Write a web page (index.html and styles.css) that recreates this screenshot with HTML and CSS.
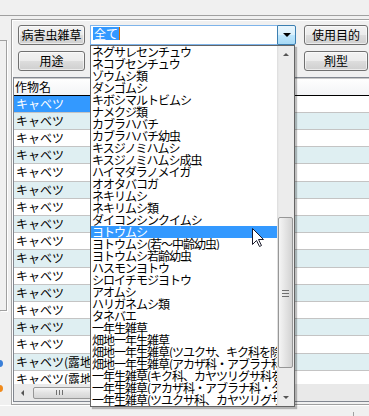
FILE: index.html
```html
<!DOCTYPE html>
<html lang="ja">
<head>
    <meta charset="UTF-8">
    <meta name="viewport" content="width=device-width, initial-scale=1.0">
    <title>作物検索</title>
    <link rel="stylesheet" href="styles.css">
</head>
<body>
    <div class="topbar"></div>

    <div class="main">
        <div class="side">
            <div class="side-box"></div>
            <span class="dot dot-blue"></span>
            <span class="dot dot-orange"></span>
        </div>

        <div class="panel">
            <div class="controls">
                <button class="btn">病害虫雑草</button>
                <div class="combo">
                    <div class="combo-text"><span class="combo-sel">全て</span><span class="caret"></span></div>
                    <div class="combo-btn"><span class="tri-down"></span></div>
                </div>
                <button class="btn btn-right">使用目的</button>
                <button class="btn">用途</button>
                <div></div>
                <button class="btn btn-right">剤型</button>
            </div>

            <div class="grid">
                <div class="grid-head"><div class="cell">作物名</div></div>
                <div class="grid-body">
                    <div class="row selected"><div class="cell">キャベツ</div></div>
                    <div class="row"><div class="cell">キャベツ</div></div>
                    <div class="row"><div class="cell">キャベツ</div></div>
                    <div class="row"><div class="cell">キャベツ</div></div>
                    <div class="row"><div class="cell">キャベツ</div></div>
                    <div class="row"><div class="cell">キャベツ</div></div>
                    <div class="row"><div class="cell">キャベツ</div></div>
                    <div class="row"><div class="cell">キャベツ</div></div>
                    <div class="row"><div class="cell">キャベツ</div></div>
                    <div class="row"><div class="cell">キャベツ</div></div>
                    <div class="row"><div class="cell">キャベツ</div></div>
                    <div class="row"><div class="cell">キャベツ</div></div>
                    <div class="row"><div class="cell">キャベツ</div></div>
                    <div class="row"><div class="cell">キャベツ</div></div>
                    <div class="row"><div class="cell">キャベツ</div></div>
                    <div class="row"><div class="cell">キャベツ(露地栽培)</div></div>
                    <div class="row"><div class="cell">キャベツ(露地栽培)</div></div>
                </div>
                <div class="hscroll">
                    <div class="hscroll-btn"><span class="tri-left"></span></div>
                    <div class="hscroll-thumb"><span class="grip-v"></span></div>
                </div>
            </div>
        </div>
    </div>

    <div class="status"><span class="status-sep"></span></div>

    <div class="droplist">
        <ul class="items">
            <li>ネグサレセンチュウ</li>
            <li>ネコブセンチュウ</li>
            <li>ゾウムシ類</li>
            <li>ダンゴムシ</li>
            <li>キボシマルトビムシ</li>
            <li>ナメクジ類</li>
            <li>カブラハバチ</li>
            <li>カブラハバチ幼虫</li>
            <li>キスジノミハムシ</li>
            <li>キスジノミハムシ成虫</li>
            <li>ハイマダラノメイガ</li>
            <li>オオタバコガ</li>
            <li>ネキリムシ</li>
            <li>ネキリムシ類</li>
            <li>ダイコンシンクイムシ</li>
            <li class="active">ヨトウムシ</li>
            <li>ヨトウムシ(若～中齢幼虫)</li>
            <li>ヨトウムシ若齢幼虫</li>
            <li>ハスモンヨトウ</li>
            <li>シロイチモジヨトウ</li>
            <li>アオムシ</li>
            <li>ハリガネムシ類</li>
            <li>タネバエ</li>
            <li>一年生雑草</li>
            <li>畑地一年生雑草</li>
            <li>畑地一年生雑草(ツユクサ、キク科を除く)</li>
            <li>畑地一年生雑草(アカザ科・アブラナ科)</li>
            <li>一年生雑草(キク科、カヤツリグサ科を除く)</li>
            <li>一年生雑草(アカザ科・アブラナ科・タデ科)</li>
            <li>一年生雑草(ツユクサ科、カヤツリグサ科)</li>
        </ul>
        <div class="vscroll">
            <div class="vscroll-btn"><span class="tri-up"></span></div>
            <div class="vscroll-track"><div class="vscroll-thumb"><span class="grip-h"></span></div></div>
            <div class="vscroll-btn"><span class="tri-down small"></span></div>
        </div>
    </div>

    <svg class="cursor" width="13" height="20" viewBox="0 0 13 20">
        <path d="M0.5 0.5 V16.5 L4.5 12.5 L7.5 18.5 L9.5 17.5 L6.5 11.5 H11.5 Z" fill="#fff" stroke="#1a1a2a" stroke-width="1" stroke-linejoin="round"/>
    </svg>
</body>
</html>
```
FILE: styles.css
```css
body {
    margin: 0;
    width: 369px;
    height: 416px;
    overflow: hidden;
    position: relative;
    background: #f0f0f0;
    font-family: "Noto Sans CJK JP", "Noto Sans", sans-serif;
    font-size: 12px;
    color: #000;
}
*, *:before, *:after {
    box-sizing: border-box;
}
.topbar {
    height: 16px;
    border-bottom: 1px solid #a0a0a0;
}
.main {
    display: flex;
    height: 389px;
}
.side {
    width: 11px;
    display: flex;
    flex-direction: column;
}
.side-box {
    margin-top: 24px;
    width: 7px;
    height: 271px;
    border: 1px solid #a0a0a0;
    border-left: none;
    box-shadow: 1px 1px 0 #fff;
}
.dot {
    display: block;
    width: 7px;
    height: 7px;
    margin-left: -4px;
    border-radius: 50%;
}
.dot-blue {
    margin-top: 49px;
    background: #3a7fd8;
}
.dot-orange {
    margin-top: 18px;
    background: #f08a1c;
}
.panel {
    flex: 1;
    min-width: 0;
    margin-top: 3px;
    border: 1px solid #a0a0a0;
    border-right: none;
    box-shadow: inset 1px 1px 0 #fff;
    display: flex;
    flex-direction: column;
}
.controls {
    display: grid;
    grid-template-columns: 67px 206px 67px;
    grid-auto-rows: 20px;
    column-gap: 5px;
    row-gap: 6px;
    padding: 5px 0 0 6px;
    margin-bottom: 6px;
}
.btn {
    font-family: inherit;
    font-size: 12px;
    padding: 0;
    line-height: 18px;
    color: #000;
    border: 1px solid #707070;
    border-radius: 3px;
    background: linear-gradient(#f2f2f2 0%, #ebebeb 50%, #dddddd 51%, #cfcfcf 100%);
    box-shadow: inset 0 0 0 1px rgba(255, 255, 255, 0.6);
}
.btn-right {
    margin-left: 3px;
}
.combo {
    display: flex;
}
.combo-text {
    flex: 1;
    background: #fff;
    border: 1px solid #7eb4ea;
    border-right: none;
    padding: 1px 0 0 2px;
    display: flex;
    align-items: flex-start;
}
.combo-sel {
    background: #3399ff;
    color: #fff;
    line-height: 13px;
    height: 13px;
    padding: 0 1px;
}
.caret {
    width: 1px;
    height: 13px;
    background: #cc6600;
}
.combo-btn {
    width: 19px;
    border: 1px solid #3c7fb1;
    border-radius: 0 2px 2px 0;
    background: linear-gradient(#eaf6fd 0%, #d9f0fc 50%, #bee6fd 51%, #a7d9f5 100%);
    display: flex;
    align-items: center;
    justify-content: center;
}
.tri-down {
    width: 0;
    height: 0;
    border-left: 4px solid transparent;
    border-right: 4px solid transparent;
    border-top: 4px solid #000;
}
.tri-down.small {
    border-left-width: 3px;
    border-right-width: 3px;
    border-top: 3px solid #555;
}
.tri-up {
    width: 0;
    height: 0;
    border-left: 3px solid transparent;
    border-right: 3px solid transparent;
    border-bottom: 3px solid #555;
}
.tri-left {
    width: 0;
    height: 0;
    border-top: 3px solid transparent;
    border-bottom: 3px solid transparent;
    border-right: 3px solid #555;
}
.grid {
    margin-left: 1px;
    height: 325px;
    border: 1px solid #828790;
    border-right: none;
    background: #fff;
    display: flex;
    flex-direction: column;
    overflow: hidden;
}
.grid-head {
    height: 18px;
    flex: none;
    border-bottom: 1px solid #000;
    box-shadow: inset 0 1px 0 #c9c9c9;
    background: linear-gradient(#ffffff, #f3f4f6);
    display: flex;
}
.grid-head .cell {
    line-height: 18px;
    padding-left: 1px;
}
.grid-body {
    flex: 1;
    overflow: hidden;
}
.row {
    height: 17px;
    border-bottom: 1px solid #c4c4c4;
    display: flex;
}
.row:nth-child(even) {
    background: #dfeff2;
}
.row:nth-child(5n) {
    height: 18px;
}
.cell {
    width: 76px;
    padding-left: 2px;
    line-height: 16px;
    white-space: nowrap;
    overflow: hidden;
}
.row.selected .cell {
    background: #3399ff;
    color: #fff;
}
.hscroll {
    height: 17px;
    flex: none;
    background: #e9e9e9;
    display: flex;
    align-items: center;
}
.hscroll-btn {
    width: 17px;
    height: 17px;
    display: flex;
    align-items: center;
    justify-content: center;
}
.hscroll-thumb {
    margin-left: 2px;
    width: 220px;
    height: 12px;
    border: 1px solid #979797;
    border-radius: 2px;
    background: linear-gradient(#f5f5f5, #e2e2e2 50%, #d6d6d6);
    padding-left: 22px;
    display: flex;
    align-items: center;
}
.grip-v {
    width: 7px;
    height: 5px;
    background: repeating-linear-gradient(90deg, #707070 0 1px, transparent 1px 3px);
}
.status {
    height: 11px;
    border-top: 1px solid #fff;
    display: flex;
    justify-content: flex-end;
}
.status-sep {
    width: 1px;
    height: 5px;
    margin: 6px 15px 0 0;
    background: #a0a0a0;
}
.droplist {
    position: absolute;
    left: 90px;
    top: 45px;
    width: 205px;
    height: 362px;
    border: 1px solid #646464;
    background: #fff;
    box-shadow: 2px 2px 1px rgba(0, 0, 0, 0.25);
    display: flex;
}
.items {
    list-style: none;
    margin: 0;
    padding: 0;
    width: 186px;
    overflow: hidden;
}
.items li {
    height: 12px;
    line-height: 12px;
    padding-left: 1px;
    letter-spacing: -1px;
    white-space: nowrap;
    overflow: hidden;
}
.items li.active {
    background: #3399ff;
    color: #fff;
}
.vscroll {
    width: 17px;
    background: linear-gradient(90deg, #dcdcdc, #ececec 2px, #ececec);
    display: flex;
    flex-direction: column;
}
.vscroll-btn {
    height: 17px;
    flex: none;
    display: flex;
    align-items: center;
    justify-content: center;
}
.vscroll-track {
    flex: 1;
    padding: 154px 1px 0 1px;
}
.vscroll-thumb {
    height: 151px;
    border: 1px solid #979797;
    border-radius: 2px;
    background: linear-gradient(90deg, #f5f5f5, #e4e4e4 50%, #d3d3d3);
    display: flex;
    align-items: center;
    justify-content: center;
}
.grip-h {
    width: 7px;
    height: 7px;
    margin-top: 2px;
    background: repeating-linear-gradient(#707070 0 1px, transparent 1px 3px);
}
.cursor {
    position: absolute;
    left: 252px;
    top: 228px;
}
```
